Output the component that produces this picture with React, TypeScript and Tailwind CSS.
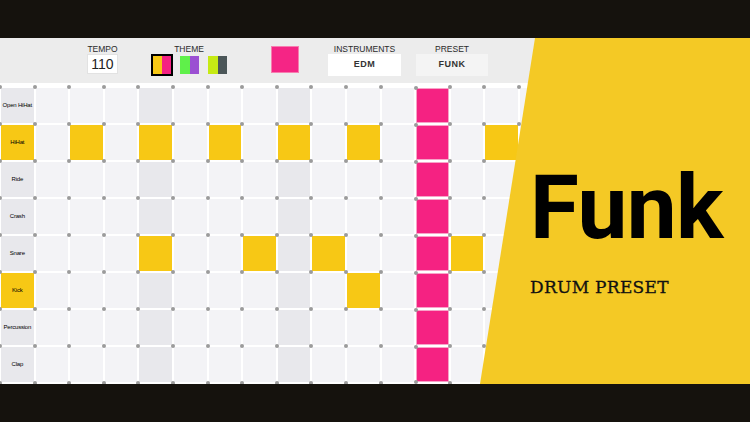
import React from 'react';

const rows = ['Open HiHat', 'HiHat', 'Ride', 'Crash', 'Snare', 'Kick', 'Percussion', 'Clap'];

// steps that are on, per row
const pattern: Record<string, number[]> = {
  'Open HiHat': [],
  HiHat: [1, 3, 5, 7, 9, 13],
  Ride: [],
  Crash: [],
  Snare: [3, 6, 8, 12],
  Kick: [9],
  Percussion: [],
  Clap: [],
};

const activeLabels = ['HiHat', 'Kick'];
const playhead = 11;
const steps = Array.from({ length: 16 }, (_, i) => i);

function Dot({ bottom }: { bottom?: boolean }) {
  return (
    <span
      className={
        bottom
          ? 'absolute -left-[3px] -bottom-[3px] h-[4px] w-[4px] rounded-full bg-[#9b9b9b]'
          : 'absolute -left-[3px] -top-[3px] h-[4px] w-[4px] rounded-full bg-[#9b9b9b]'
      }
    />
  );
}

function Cell({ on, step, last }: { on: boolean; step: number; last: boolean }) {
  let cls = 'relative bg-[#f3f3f6]';
  if (step === playhead) cls = 'relative bg-[#f52282] border border-[#f7a3c8]';
  else if (on) cls = 'relative bg-[#f7c815]';
  else if (step % 4 === 3) cls = 'relative bg-[#e8e8ec]';
  return (
    <div className={cls}>
      <Dot />
      {last && <Dot bottom />}
    </div>
  );
}

function Label({ text, last }: { text: string; last: boolean }) {
  const active = activeLabels.includes(text);
  return (
    <div
      className={`relative flex items-center justify-center whitespace-nowrap text-[6px] tracking-[-0.2px] text-black ${
        active ? 'bg-[#f7c815]' : 'bg-[#e8e8ec]'
      }`}
    >
      <Dot />
      {last && <Dot bottom />}
      {text}
    </div>
  );
}

function Control({ label, children, width }: { label: string; children: React.ReactNode; width: string }) {
  return (
    <div className={`flex flex-col items-center ${width}`}>
      <div className="h-[10px] text-[8.5px] leading-[10px] text-[#2a2a2a]">{label}</div>
      {children}
    </div>
  );
}

export default function App() {
  return (
    <div
      className="flex h-[422px] w-[750px] flex-col overflow-hidden bg-[#15120d]"
      style={{ fontFamily: '"Liberation Sans", Arial, sans-serif' }}
    >
      <div className="h-[38px] shrink-0" />

      <div className="relative h-[346px] shrink-0 overflow-hidden bg-white">
        {/* controls */}
        <div className="flex h-[45px] items-start bg-[#ececec] pl-[87px] pt-[6px]">
          <Control label="TEMPO" width="w-[31px]">
            <div className="flex h-[20px] w-[31px] items-center justify-center border border-[#e2e2e2] bg-white text-[14px] text-[#222]">
              110
            </div>
          </Control>

          <Control label="THEME" width="ml-[33px] w-[76px]">
            <div className="flex w-full items-center">
              <div className="flex h-[22px] w-[22px] border-2 border-black">
                <div className="flex-1 bg-[#f7c815]" />
                <div className="flex-1 bg-[#f52282]" />
              </div>
              <div className="ml-[7px] flex h-[18px] w-[19px]">
                <div className="flex-1 bg-[#5ff04a]" />
                <div className="flex-1 bg-[#9b4fd2]" />
              </div>
              <div className="ml-[9px] flex h-[18px] w-[19px]">
                <div className="flex-1 bg-[#c6ea14]" />
                <div className="flex-1 bg-[#4b5658]" />
              </div>
            </div>
          </Control>

          <div className="ml-[44px] mt-[2px] h-[27px] w-[28px] border border-[#f77db0] bg-[#f52585]" />

          <Control label="INSTRUMENTS" width="ml-[29px] w-[73px]">
            <div className="flex h-[22px] w-full items-center justify-center bg-white text-[9px] font-bold tracking-[0.5px] text-[#333]">
              EDM
            </div>
          </Control>

          <Control label="PRESET" width="ml-[15px] w-[72px]">
            <div className="flex h-[22px] w-full items-center justify-center bg-[#f4f4f4] text-[9px] font-bold tracking-[0.5px] text-[#333]">
              FUNK
            </div>
          </Control>
        </div>

        {/* sequencer grid */}
        <div className="grid grid-cols-[repeat(17,32.6px)] grid-rows-[repeat(8,35px)] gap-[2px] pl-[1px] pt-[5px]">
          {rows.map((name, r) => (
            <React.Fragment key={name}>
              <Label text={name} last={r === rows.length - 1} />
              {steps.map((s) => (
                <Cell key={s} step={s} on={pattern[name].includes(s)} last={r === rows.length - 1} />
              ))}
            </React.Fragment>
          ))}
        </div>

        {/* preset panel */}
        <div className="absolute bottom-0 right-0 top-0 z-10 flex w-[270px] flex-col bg-[#f4c925] pl-[50px] [clip-path:polygon(55px_0,100%_0,100%_100%,0_100%)]">
          <div
            className="mt-[125px] text-[89px] font-bold leading-[89px] tracking-[-0.5px] text-black"
            style={{ fontFamily: 'Roboto, "Liberation Sans", sans-serif' }}
          >
            Funk
          </div>
          <div
            className="mt-[25px] text-[17px] leading-[20px] tracking-[0.3px] text-[#111] [-webkit-text-stroke:0.3px_#111]"
            style={{ fontFamily: '"DejaVu Serif", "Liberation Serif", serif' }}
          >
            DRUM PRESET
          </div>
        </div>
      </div>

      <div className="h-[38px] shrink-0" />
    </div>
  );
}
